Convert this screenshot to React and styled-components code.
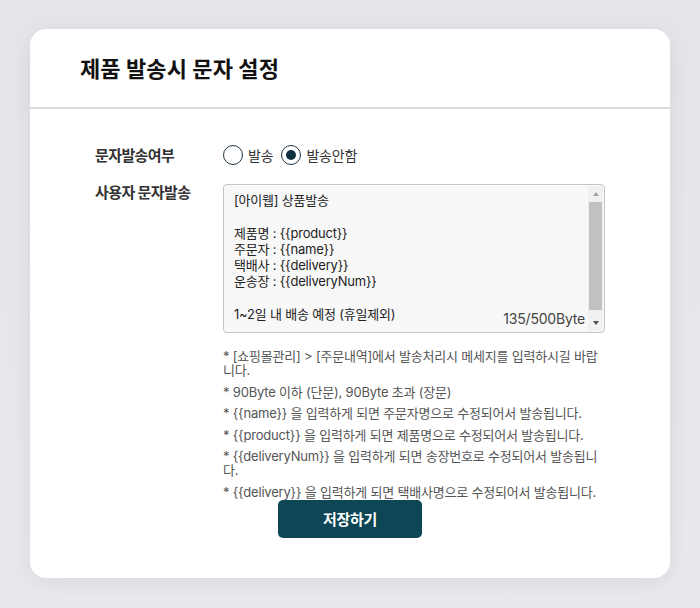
import React from "react";
import styled, { createGlobalStyle } from "styled-components";

const Global = createGlobalStyle`
  html, body { margin: 0; padding: 0; }
  body {
    background: #e6e7ea;
    font-family: "Inter", "Noto Sans CJK KR", sans-serif;
    color: #222;
  }
  * { box-sizing: border-box; }
`;

const Page = styled.div`
  padding: 29px 30px 30px;
  min-height: 608px;
  background: linear-gradient(180deg, #e4e5e8 0%, #e8e9ec 100%);
`;

const Card = styled.div`
  background: #fff;
  border-radius: 16px;
  box-shadow: 0 4px 22px rgba(0, 0, 0, 0.07);
  padding-bottom: 40px;
`;

const Header = styled.div`
  height: 80px;
  display: flex;
  align-items: center;
  padding-left: 50px;
  padding-bottom: 2px;
  border-bottom: 2px solid #dcdcde;
`;

const Title = styled.h1`
  margin: 0;
  font-size: 22px;
  font-weight: 700;
  letter-spacing: 0.1px;
  color: #111;
`;

const Body = styled.div`
  padding: 36px 65px 0 65px;
  display: flex;
  flex-direction: column;
  gap: 19px;
`;

const Row = styled.div`
  display: flex;
  align-items: ${(p) => (p.$top ? "flex-start" : "center")};
`;

const Label = styled.div`
  width: 128px;
  flex-shrink: 0;
  font-size: 15px;
  font-weight: 700;
  color: #333;
  letter-spacing: -0.6px;
  line-height: 17px;
`;

const Field = styled.div`
  flex: 1;
  display: flex;
  flex-direction: column;
`;

const RadioGroup = styled.div`
  display: flex;
  align-items: center;
  gap: 8px;
`;

const RadioOption = styled.label`
  display: flex;
  align-items: center;
  gap: 5px;
  font-size: 14px;
  color: #333;
  letter-spacing: -0.2px;
`;

const RadioCircle = styled.span`
  width: 20px;
  height: 20px;
  border-radius: 50%;
  border: 1.5px solid #1d3440;
  display: flex;
  align-items: center;
  justify-content: center;
  background: #fff;
  &::after {
    content: "";
    width: 10px;
    height: 10px;
    border-radius: 50%;
    background: #0e3242;
    display: ${(p) => (p.$checked ? "block" : "none")};
  }
`;

const TextBox = styled.div`
  position: relative;
  height: 149px;
  display: flex;
  background: #f8f8f8;
  border: 1px solid #c6c6c6;
  border-radius: 4px;
`;

const Text = styled.div`
  flex: 1;
  padding: 7px 10px;
  font-size: 13px;
  line-height: 16.3px;
  color: #222;
  white-space: pre-wrap;
  letter-spacing: -0.2px;
  overflow: hidden;
`;

const Scrollbar = styled.div`
  width: 15px;
  margin: 1px 1px 1px 0;
  background: #f1f1f1;
  display: flex;
  flex-direction: column;
  align-items: center;
`;

const Arrow = styled.div`
  height: 16px;
  width: 100%;
  display: flex;
  align-items: center;
  justify-content: center;
  &::before {
    content: "";
    border-left: 3.5px solid transparent;
    border-right: 3.5px solid transparent;
    ${(p) =>
      p.$down
        ? "border-top: 4px solid #505050;"
        : "border-bottom: 4px solid #a3a3a3;"}
  }
`;

const Thumb = styled.div`
  width: 13px;
  height: 108px;
  background: #c1c1c1;
`;

const Track = styled.div`
  flex: 1;
`;

const Count = styled.div`
  position: absolute;
  right: 19px;
  bottom: 5px;
  font-size: 14px;
  color: #444;
  letter-spacing: -0.2px;
`;

const Notes = styled.ul`
  list-style: none;
  margin: 16px 0 0;
  padding: 0;
  display: flex;
  flex-direction: column;
  gap: 7.5px;
`;

const Note = styled.li`
  font-size: 13px;
  line-height: 14px;
  color: #555;
  letter-spacing: -0.2px;
`;

const ButtonRow = styled.div`
  display: flex;
  justify-content: center;
  margin-top: 1px;
`;

const SaveButton = styled.button`
  width: 144px;
  height: 38px;
  border: none;
  border-radius: 5px;
  background: #0d4654;
  color: #fff;
  font-family: inherit;
  font-size: 15px;
  font-weight: 700;
  letter-spacing: -0.3px;
`;

const message = `[아이웹] 상품발송

제품명 : {{product}}
주문자 : {{name}}
택배사 : {{delivery}}
운송장 : {{deliveryNum}}

1~2일 내 배송 예정 (휴일제외)`;

const notes = [
  "* [쇼핑몰관리] > [주문내역]에서 발송처리시 메세지를 입력하시길 바랍니다.",
  "* 90Byte 이하 (단문), 90Byte 초과 (장문)",
  "* {{name}} 을 입력하게 되면 주문자명으로 수정되어서 발송됩니다.",
  "* {{product}} 을 입력하게 되면 제품명으로 수정되어서 발송됩니다.",
  "* {{deliveryNum}} 을 입력하게 되면 송장번호로 수정되어서 발송됩니다.",
  "* {{delivery}} 을 입력하게 되면 택배사명으로 수정되어서 발송됩니다.",
];

export default function App() {
  return (
    <>
      <Global />
      <Page>
        <Card>
          <Header>
            <Title>제품 발송시 문자 설정</Title>
          </Header>
          <Body>
            <Row>
              <Label>문자발송여부</Label>
              <RadioGroup>
                <RadioOption>
                  <RadioCircle />
                  발송
                </RadioOption>
                <RadioOption>
                  <RadioCircle $checked />
                  발송안함
                </RadioOption>
              </RadioGroup>
            </Row>
            <Row $top>
              <Label>사용자 문자발송</Label>
              <Field>
                <TextBox>
                  <Text>{message}</Text>
                  <Scrollbar>
                    <Arrow />
                    <Thumb />
                    <Track />
                    <Arrow $down />
                  </Scrollbar>
                  <Count>135/500Byte</Count>
                </TextBox>
                <Notes>
                  {notes.map((n) => (
                    <Note key={n}>{n}</Note>
                  ))}
                </Notes>
              </Field>
            </Row>
          </Body>
          <ButtonRow>
            <SaveButton>저장하기</SaveButton>
          </ButtonRow>
        </Card>
      </Page>
    </>
  );
}
